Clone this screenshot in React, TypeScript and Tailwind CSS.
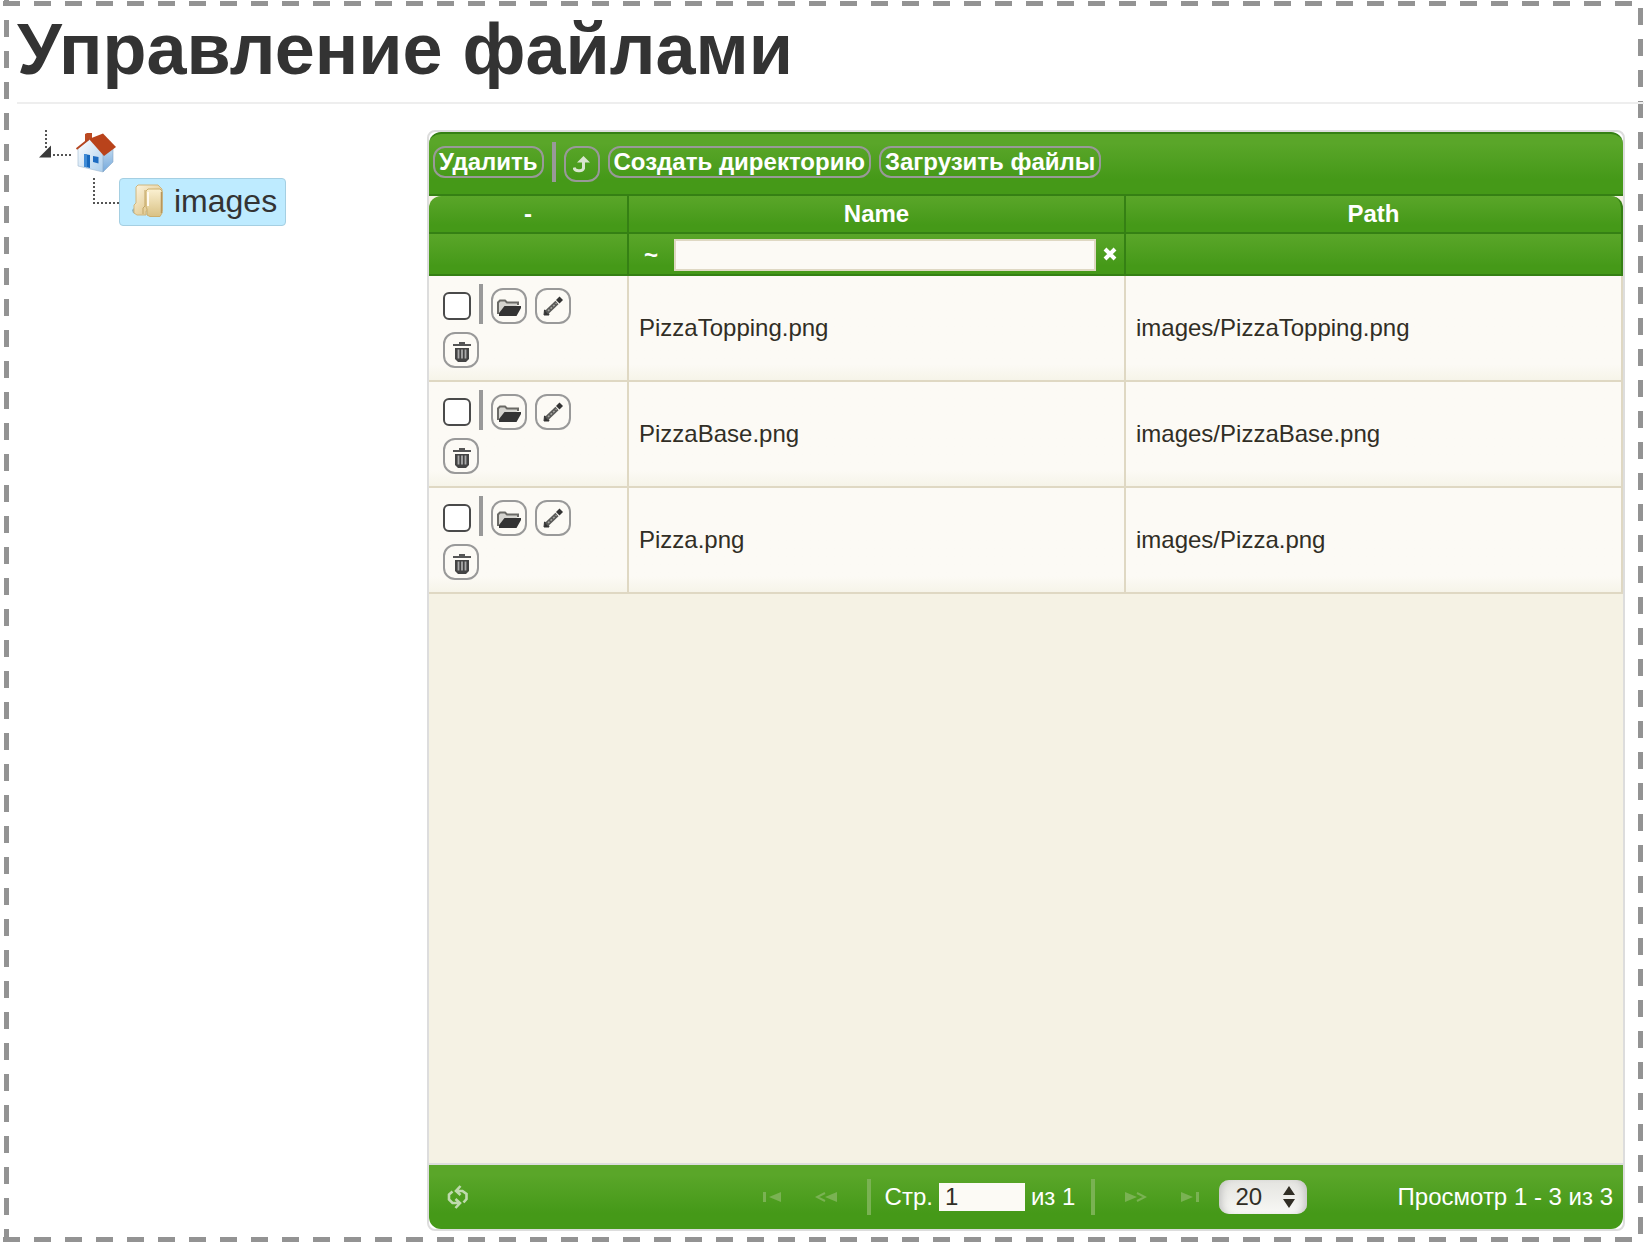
import React from "react";

const files = ["PizzaTopping.png", "PizzaBase.png", "Pizza.png"];

const iconButton =
  "flex size-9 shrink-0 items-center justify-center rounded-xl border-2 border-[#999]";
const textButton =
  "h-8 rounded-xl border-2 border-[#999] px-1 text-2xl leading-7 font-bold whitespace-nowrap";
const green = "bg-linear-to-b from-[#5aa629] from-15% to-[#459918] to-75%";
const headCell =
  "border-r-2 border-b-2 border-[#358014] bg-linear-to-b from-[#5aa629] to-[#459918] to-80% p-0 font-bold text-white";
const bodyCell =
  "border-r-2 border-b-2 border-[#dfd8c3] bg-linear-to-b from-[#fcfaf5] from-85% to-[#f6f4e9] p-0";

function ParentIcon() {
  return (
    <svg width="18" height="18" viewBox="0 0 18 18" fill="none" aria-hidden="true">
      <path d="M1 12.500c1 4 8 4.500 9.500 1V6" stroke="#d9e6cf" strokeWidth="3" />
      <path d="M4 7.500L10.500 1 17 7.500z" fill="#d9e6cf" />
    </svg>
  );
}

function FolderOpenIcon() {
  return (
    <svg className="translate-y-0.5" width="26" height="18" viewBox="0 0 26 18" aria-hidden="true">
      <path d="M2 15V3.500L4 1.500h5l2 2h11V6" fill="#d5d4cf" stroke="#6b6a66" strokeWidth="2" />
      <path d="M8.500 7H25v2l-4.500 8H3v-3z" fill="#333" />
    </svg>
  );
}

function PencilIcon() {
  return (
    <svg width="22" height="22" viewBox="0 0 22 22" aria-hidden="true">
      <path d="M2 20l.5-5L6 16.500 7 20z" fill="#333" stroke="#333" />
      <path d="M4.500 17.500L15 7.500" stroke="#5a5a58" strokeWidth="4.500" />
      <path d="M6 16L14.500 8" stroke="#a5a5a0" strokeWidth="1.500" strokeDasharray="2 1.500" />
      <path d="M14 5L17.500 1.500 21 5 17.500 8.500z" fill="#333" />
    </svg>
  );
}

function TrashIcon() {
  return (
    <svg className="translate-x-px translate-y-0.5" width="20" height="22" viewBox="0 0 20 22" aria-hidden="true">
      <path d="M7 1h6v2h6v2H1V3h6z" fill="#555" />
      <path d="M3 7h14v11l-3 3H6l-3-3z" fill="#444" />
      <path d="M6.500 8.500v9M10 8.500v9M13.500 8.500v9" stroke="#aaa" strokeWidth="1.800" />
    </svg>
  );
}

function HouseIcon() {
  return (
    <svg width="42" height="42" viewBox="0 0 42 42" aria-hidden="true">
      <defs>
        <linearGradient id="wall" x1="0" y1="0" x2="1" y2="1">
          <stop offset="0" stopColor="#fff" />
          <stop offset="1" stopColor="#a9cdec" />
        </linearGradient>
        <linearGradient id="side" x1="0" y1="0" x2="0" y2="1">
          <stop offset="0" stopColor="#c5dcf0" />
          <stop offset="1" stopColor="#74a9dc" />
        </linearGradient>
      </defs>
      <path d="M10 2l2-1h5v7l-7 5z" fill="#bb4a22" />
      <path d="M3 16L15 7l14 15-1 18L3 34z" fill="url(#wall)" stroke="#9fb9d0" strokeWidth=".6" />
      <path d="M28 22l10-8v16L28 40z" fill="url(#side)" stroke="#8aa9c8" strokeWidth=".6" />
      <path d="M14 7L28 1.500 41 15 29 24z" fill="#b9431b" />
      <path d="M14 7L1.500 17" stroke="#b5451f" strokeWidth="1.800" />
      <path d="M9 22l6 1v13l-6-1.500z" fill="#1668bd" />
      <path d="M9 22l3 .5v13L9 34.500z" fill="#3f8bd6" />
      <path d="M18 24l5.500 1v6.500L18 30z" fill="#1e6cc2" />
    </svg>
  );
}

function FoldersIcon() {
  return (
    <svg width="32" height="34" viewBox="0 0 32 34" aria-hidden="true">
      <defs>
        <linearGradient id="back" x1="0" y1="0" x2="1" y2="1">
          <stop offset="0" stopColor="#fdf6e2" />
          <stop offset="1" stopColor="#d6b871" />
        </linearGradient>
        <linearGradient id="front" x1="0" y1="0" x2="0" y2="1">
          <stop offset="0" stopColor="#fbf1d2" />
          <stop offset="1" stopColor="#d9c184" />
        </linearGradient>
      </defs>
      <path d="M0 26l4-4v8l-3-1z" fill="#8fb3bf" />
      <path d="M2 29V21l2-2V3l2-2h20l4 4v22H14v4H5z" fill="url(#back)" stroke="#cfb67e" />
      <path d="M13 6v16l-2 2v6" fill="none" stroke="#c2a566" />
      <path d="M14 7l2-2h12l2 2v22l-2 3.500H18L15 31v-6l-1-2z" fill="url(#front)" stroke="#cbae6d" />
      <path d="M16 8v14" stroke="#fffaf0" strokeWidth="2" />
      <path d="M29.500 8v21" stroke="#b8965a" strokeWidth="1.500" />
    </svg>
  );
}

function RefreshIcon() {
  return (
    <svg width="22" height="24" viewBox="0 0 22 24" fill="none" stroke="#bfdaae" strokeWidth="2.600" aria-hidden="true">
      <path d="M13.500 1L9 6l4.500 4M9 6h6.500L19.500 9v5l-3 3.500" />
      <path d="M8.500 23l4.500-5-4.500-4M13 18H5.500L2 14.500V9.500L5.500 6.500" />
    </svg>
  );
}

function PagerArrow({ kind }: { kind: "first" | "prev" | "next" | "last" }) {
  const flip = kind === "next" || kind === "last";
  return (
    <svg
      className={flip ? "-scale-x-100" : ""}
      width="22"
      height="12"
      viewBox="0 0 22 12"
      aria-hidden="true"
    >
      {kind === "first" || kind === "last" ? (
        <path d="M2 1h3v10H2zM20 1v10L8 6z" fill="#7ab253" />
      ) : (
        <>
          <path d="M22 1v10L10 6z" fill="#7ab253" />
          <path d="M10 2L2 6l8 4" fill="none" stroke="#7ab253" strokeWidth="2" />
        </>
      )}
    </svg>
  );
}

function Tree() {
  return (
    <nav className="w-[410px] shrink-0" aria-label="Директории">
      <ul className="pl-[22px]">
        <li>
          <div className="flex h-12">
            <button type="button" aria-label="Свернуть">
              <svg width="32" height="48" viewBox="0 0 32 48" aria-hidden="true">
                <path d="M7 0v18M14 25h18" stroke="#555" strokeWidth="2" strokeDasharray="2 2" fill="none" />
                <path d="M0 27.500L12 15.500v12z" fill="#3a3a3a" />
              </svg>
            </button>
            <a href="#root" className="flex w-12 items-start justify-center pt-0.5 pl-0.5" aria-label="Корень">
              <HouseIcon />
            </a>
          </div>
          <ul className="pl-8">
            <li className="flex h-12">
              <svg width="48" height="48" viewBox="0 0 48 48" aria-hidden="true">
                <path d="M23 0v24M22 25H48" stroke="#555" strokeWidth="2" strokeDasharray="2 2" fill="none" />
              </svg>
              <a
                href="#images"
                className="flex items-center gap-2.5 rounded border border-[#a5cfe2] bg-[#beebff] pr-2 pb-0.5 pl-3 text-[32px] leading-10"
              >
                <FoldersIcon />
                images
              </a>
            </li>
          </ul>
        </li>
      </ul>
    </nav>
  );
}

function RowActions({ file }: { file: string }) {
  return (
    <div className="flex flex-col gap-2 pt-2 pb-3 pl-3.5">
      <div className="flex items-end gap-2">
        <input
          type="checkbox"
          aria-label={file}
          className="mb-1 size-7 appearance-none rounded-md border-2 border-[#4a4a4a] bg-white"
        />
        <span className="h-10 w-1 bg-[#999]" />
        <button type="button" aria-label="Открыть" className={iconButton}>
          <FolderOpenIcon />
        </button>
        <button type="button" aria-label="Переименовать" className={iconButton}>
          <PencilIcon />
        </button>
      </div>
      <button type="button" aria-label="Удалить файл" className={iconButton}>
        <TrashIcon />
      </button>
    </div>
  );
}

function Toolbar() {
  return (
    <div className={`flex h-16 items-start gap-2 rounded-t-xl border-t-2 border-b-2 border-[#358014] pt-2 pl-1 text-white ${green}`}>
      <button type="button" className={`mt-1 ${textButton}`}>Удалить</button>
      <span className="h-10 w-1 bg-[#999]" />
      <button type="button" aria-label="На уровень вверх" className={`mt-1 ${iconButton}`}>
        <ParentIcon />
      </button>
      <button type="button" className={`mt-1 ${textButton}`}>Создать директорию</button>
      <button type="button" className={`mt-1 ${textButton}`}>Загрузить файлы</button>
    </div>
  );
}

function FileTable() {
  return (
    <table className="w-full table-fixed border-separate border-spacing-0 text-2xl">
      <thead>
        <tr className="h-[38px] leading-9">
          <th className={`w-[200px] rounded-tl-xl ${headCell}`}>-</th>
          <th className={headCell}>Name</th>
          <th className={`rounded-tr-xl ${headCell}`}>Path</th>
        </tr>
        <tr className="h-[42px]">
          <td className={headCell} />
          <td className={headCell}>
            <div className="flex items-center pt-0.5 pr-[7px] pl-[15px]">
              <label htmlFor="name-filter" className="w-[30px] leading-8">~</label>
              <input
                id="name-filter"
                type="text"
                className="h-8 min-w-0 flex-1 border-2 border-[#dfd8c3] bg-[#fcfaf5] px-1 font-normal text-[#312e25]"
              />
              <button type="button" aria-label="Очистить" className="ml-[7px] flex">
                <svg width="14" height="18" viewBox="0 0 14 18" aria-hidden="true">
                  <path d="M2 3l10 10M12 3L2 13" stroke="#fff" strokeWidth="4" />
                </svg>
              </button>
            </div>
          </td>
          <td className={headCell} />
        </tr>
      </thead>
      <tbody>
        {files.map((file) => (
          <tr key={file} className="text-[#312e25]">
            <td className={bodyCell}>
              <RowActions file={file} />
            </td>
            <td className={`${bodyCell} pl-2.5`}>{file}</td>
            <td className={`${bodyCell} pl-2.5`}>images/{file}</td>
          </tr>
        ))}
      </tbody>
    </table>
  );
}

function Pager() {
  return (
    <div className={`flex h-16 items-center rounded-b-xl px-2.5 text-2xl text-white ${green}`}>
      <div className="flex flex-1">
        <button type="button" aria-label="Обновить" className="px-2">
          <RefreshIcon />
        </button>
      </div>
      <div className="flex items-center whitespace-nowrap">
        <button type="button" aria-label="Первая страница" className="px-4"><PagerArrow kind="first" /></button>
        <button type="button" aria-label="Предыдущая страница" className="px-4"><PagerArrow kind="prev" /></button>
        <span className="mx-3.5 h-9 w-1 bg-[#7ab253]" />
        <label htmlFor="page">Стр.</label>
        <input
          id="page"
          type="text"
          defaultValue="1"
          className="mx-1.5 h-7 w-[86px] bg-[#fcfaf5] px-1.5 text-[#312e25]"
        />
        <span>из 1</span>
        <span className="mr-3.5 ml-4 h-9 w-1 bg-[#7ab253]" />
        <button type="button" aria-label="Следующая страница" className="px-4"><PagerArrow kind="next" /></button>
        <button type="button" aria-label="Последняя страница" className="px-4"><PagerArrow kind="last" /></button>
        <div className="relative ml-0.5">
          <select
            aria-label="Строк на странице"
            defaultValue="20"
            className="h-[34px] w-[88px] appearance-none rounded-[10px] bg-linear-to-b from-[#e4e4e0] to-[#f8f8f5] pl-4 text-2xl leading-8 text-[#312e25] shadow-[inset_8px_0_8px_-6px_#bbb,inset_-8px_0_8px_-6px_#bbb]"
          >
            <option>20</option>
            <option>50</option>
          </select>
          <svg className="pointer-events-none absolute top-1.5 right-3" width="12" height="22" viewBox="0 0 12 22" aria-hidden="true">
            <path d="M0 9L6 0l6 9zM0 13h12l-6 9z" fill="#312e25" />
          </svg>
        </div>
      </div>
      <div className="flex-1 text-right whitespace-nowrap">Просмотр 1 - 3 из 3</div>
    </div>
  );
}

export default function App() {
  return (
    <main className="flex min-h-screen flex-col bg-white bg-[linear-gradient(90deg,#939393_17px,transparent_0),linear-gradient(90deg,#939393_17px,transparent_0),linear-gradient(#939393_17px,transparent_0),linear-gradient(#939393_17px,transparent_0)] bg-[length:31px_5px,31px_5px,5px_31px,5px_31px] bg-[position:3px_1px,3px_100%,left_4px_top_20px,right_1px_top_8px] [background-repeat:repeat-x,repeat-x,repeat-y,repeat-y] pb-[11px] pl-[17px] font-['Liberation_Sans',Arial,sans-serif] text-[#333]">
      <h1 className="border-b-2 border-[#eee] pt-[9px] pb-[13px] text-[72px] leading-[80px] font-bold">
        Управление файлами
      </h1>
      <div className="flex flex-1 pt-[26px] pr-[19px]">
        <Tree />
        <section className="flex min-w-0 flex-1 flex-col rounded-lg border-2 border-[#ddd]">
          <Toolbar />
          <div className="flex-1 bg-[#f5f2e4]">
            <FileTable />
          </div>
          <div className="border-t-2 border-[#ddd]">
            <Pager />
          </div>
        </section>
      </div>
    </main>
  );
}
